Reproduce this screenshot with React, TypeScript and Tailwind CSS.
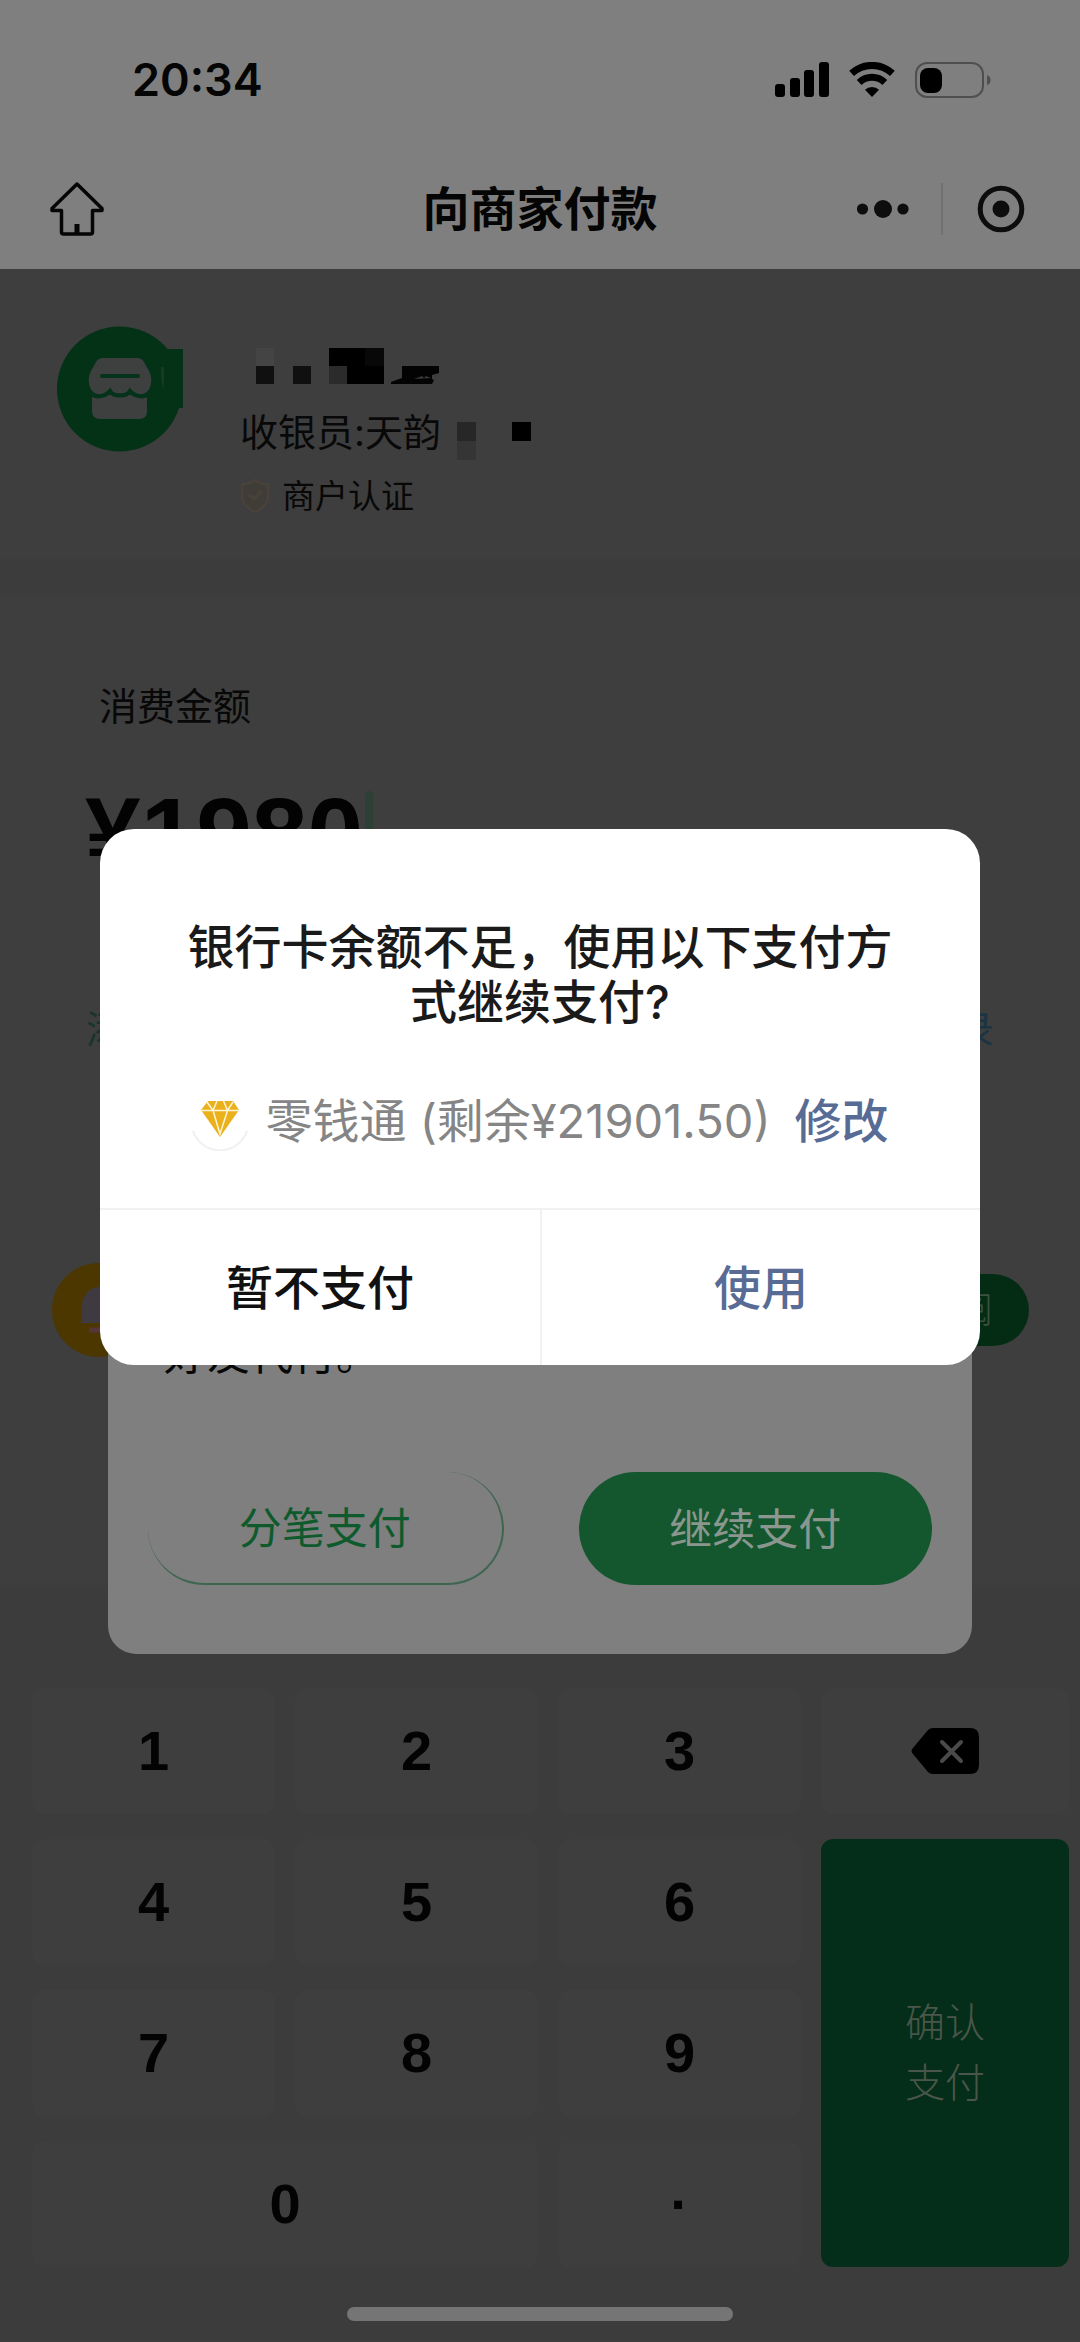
import { useState } from 'react'
import { clsx } from 'clsx'

/* ─── Keypad Config ─── */
const KEYS = [
  { id: '1', area: 'col-start-1 row-start-1' },
  { id: '2', area: 'col-start-2 row-start-1' },
  { id: '3', area: 'col-start-3 row-start-1' },
  { id: '4', area: 'col-start-1 row-start-2' },
  { id: '5', area: 'col-start-2 row-start-2' },
  { id: '6', area: 'col-start-3 row-start-2' },
  { id: '7', area: 'col-start-1 row-start-3' },
  { id: '8', area: 'col-start-2 row-start-3' },
  { id: '9', area: 'col-start-3 row-start-3' },
  { id: '0', area: 'col-start-1 col-span-2 row-start-4' },
  { id: '·', area: 'col-start-3 row-start-4' },
]

/* ─── Icons ─── */
function SignalIcon() {
  return (
    <svg width="54" height="36" viewBox="0 0 54 36" fill="#000">
      <rect x="0" y="22" width="10" height="13" rx="3" />
      <rect x="15" y="16" width="10" height="19" rx="3" />
      <rect x="29" y="8" width="10" height="27" rx="3" />
      <rect x="44" y="0" width="10" height="35" rx="3" />
    </svg>
  )
}

function WifiIcon() {
  return (
    <svg width="46" height="36" viewBox="0 0 46 36" fill="none" stroke="#000">
      <path d="M2.6 11.400A30 30 0 0 1 43.4 11.400" strokeWidth="7" />
      <path d="M10.2 20.500A18.500 18.500 0 0 1 35.8 20.500" strokeWidth="7" />
      <path d="M23 35l-7-7.2a10 10 0 0 1 14 0z" fill="#000" stroke="none" />
    </svg>
  )
}

function BatteryIcon() {
  return (
    <svg width="76" height="36" viewBox="0 0 76 36" fill="none">
      <rect x="1" y="1" width="67" height="34" rx="11" stroke="#4f4f4f" strokeWidth="2" />
      <rect x="5" y="6" width="22" height="25" rx="8" fill="#000" />
      <path d="M72 13c3 1 3.500 3 3.500 5s-.5 4-3.500 5z" fill="#4f4f4f" />
    </svg>
  )
}

function HomeIcon() {
  return (
    <svg width="54" height="54" viewBox="0 0 54 54" fill="none" stroke="#050505" strokeWidth="3.500" strokeLinejoin="round">
      <path d="M27 2L2 26.500v2h9.500V50q0 2 2 2h27q2 0 2-2V28.500H52v-2z" />
      <path d="M27 52V42" strokeWidth="5" />
    </svg>
  )
}

function MoreIcon() {
  return (
    <svg width="52" height="20" viewBox="0 0 52 20" fill="#0d0d0d">
      <circle cx="5.500" cy="10" r="5.600" />
      <circle cx="26" cy="10" r="9" />
      <circle cx="46" cy="10" r="5.600" />
    </svg>
  )
}

function CloseIcon() {
  return (
    <svg width="48" height="48" viewBox="0 0 48 48" fill="none">
      <circle cx="24" cy="24" r="20.800" stroke="#0d0d0d" strokeWidth="5" />
      <circle cx="24" cy="24" r="8.500" fill="#0d0d0d" />
    </svg>
  )
}

function ShopLogo() {
  return (
    <svg width="128" height="126" viewBox="0 0 128 126" fill="none">
      <circle cx="62.500" cy="63" r="62.500" fill="#033217" />
      <rect x="105" y="23" width="21" height="59" fill="#033217" />
      <path d="M46 32h34q5 0 7 4l5 9q3 6 2 12c-1 8-6 12-12 11-4 0-6-2-9-4-3 5-17 5-20 0-3 2-5 4-9 4-6 1-11-3-12-11q-1-6 2-12l5-9q2-4 7-4z" fill="#3e4040" />
      <path d="M35 69h55v16q0 8-8 8H43q-8 0-8-8z" fill="#3e4040" />
      <path d="M33 66c3 4 7 5 11 4 4 0 6-2 9-5 3 6 17 6 20 0 3 3 5 5 9 5 4 1 8 0 11-4" stroke="#05321a" strokeWidth="4" />
      <path d="M45 50h36" stroke="#05321a" strokeWidth="4" strokeLinecap="round" />
      <path d="M104 41v8q0 8 3 14V41z" fill="#1b3827" />
    </svg>
  )
}

function MaskedName() {
  return (
    <svg width="184" height="36" viewBox="0 0 184 36">
      <rect x="0" y="0" width="18" height="18" fill="#444" />
      <rect x="0" y="18" width="18" height="18" fill="#101010" />
      <rect x="37" y="18" width="18" height="18" fill="#101010" />
      <rect x="73" y="0" width="55" height="36" fill="#000" />
      <rect x="109" y="0" width="19" height="18" fill="#080808" />
      <rect x="73" y="18" width="18" height="18" fill="#2b2b2b" />
      <path d="M146 18h37v7l-7 2v4l2 1-2 4h-41v-2l11-4z" fill="#030303" />
      <path d="M158 31l8-3 2 2 2-2 5 2z" fill="#3a3a3a" />
    </svg>
  )
}

function MaskedSuffix() {
  return (
    <svg width="74" height="38" viewBox="0 0 74 38">
      <rect x="0" y="0" width="19" height="19" fill="#272727" />
      <rect x="0" y="19" width="19" height="19" fill="#353535" />
      <rect x="55" y="0" width="19" height="19" fill="#000" />
    </svg>
  )
}

function ShieldIcon() {
  return (
    <svg width="30" height="36" viewBox="0 0 30 36" fill="none" stroke="#48423a" strokeWidth="2.500" strokeLinejoin="round">
      <path d="M15 2C11 5 6 6 2 6v14c0 6 5 10 13 14 8-4 13-8 13-14V6c-4 0-9-1-13-4z" fill="#403d39" />
      <path d="M9 17l5 4 8-8" strokeWidth="3" />
    </svg>
  )
}

function BellIcon() {
  return (
    <svg width="94" height="94" viewBox="0 0 94 94" fill="none">
      <circle cx="47" cy="47" r="47" fill="#4d3700" />
      <path d="M28 60q2-2 2-7v-9c0-12 8-20 17-20s17 8 17 20v9q0 5 2 7z" fill="#3f3a40" />
      <path d="M37 67h20" stroke="#53353a" strokeWidth="5" />
    </svg>
  )
}

function DiamondIcon() {
  return (
    <svg width="58" height="60" viewBox="0 0 58 60" fill="none">
      <path d="M2 40a28.500 28.500 0 0 0 54 0" stroke="#f0f0f0" strokeWidth="2" />
      <path d="M17 10h25l6 9-19 27L10 19z" fill="#eab11c" />
      <path d="M9 19.500h40M22 19.500L29 43l7.500-23.500M16 11l6 8.500 4-9.500M42 11l-5.500 8.500-4-9.500" stroke="#fff6da" strokeWidth="1.500" />
    </svg>
  )
}

function BackspaceIcon() {
  return (
    <svg width="68" height="48" viewBox="0 0 68 48" fill="none">
      <path d="M22 1h37q9 0 9 9v28q0 9-9 9H22q-3 0-5-2L2 27q-3-3 0-6L17 3q2-2 5-2z" fill="#000" />
      <path d="M31 15l19 19M50 15L31 34" stroke="#4a4a4a" strokeWidth="4" strokeLinecap="round" />
    </svg>
  )
}

/* ─── Header ─── */
function Header() {
  return (
    <header className="bg-[#7f7f7f] pt-[52px]">
      <div className="flex h-14 items-center justify-between pr-[89px] pl-[132px]">
        <span className="text-[45px] leading-14 font-semibold text-[#050505]">20:34</span>
        <div className="flex items-center gap-5">
          <SignalIcon />
          <WifiIcon />
          <BatteryIcon />
        </div>
      </div>
      <nav className="mt-[41px] grid h-[120px] grid-cols-[1fr_auto_1fr] items-center">
        <div className="flex pl-[50px]">
          <button aria-label="首页">
            <HomeIcon />
          </button>
        </div>
        <h1 className="text-[47px] leading-14 font-bold text-[#050505]">向商家付款</h1>
        <div className="flex items-center justify-end pr-[55px]">
          <button aria-label="更多">
            <MoreIcon />
          </button>
          <span className="mr-[34px] ml-[32px] h-[52px] w-[2px] bg-[#717171]" />
          <button aria-label="关闭">
            <CloseIcon />
          </button>
        </div>
      </nav>
    </header>
  )
}

/* ─── Merchant ─── */
function Merchant() {
  return (
    <section className="flex gap-[55px] pt-[57px] pr-14 pb-[43px] pl-[57px] text-[#080808]">
      <ShopLogo />
      <div className="pt-[22px]">
        <div className="pl-4">
          <MaskedName />
        </div>
        <div className="mt-5 flex items-end gap-4">
          <span className="text-[38px] leading-14">收银员:天韵</span>
          <MaskedSuffix />
        </div>
        <div className="mt-4 flex items-center gap-3">
          <ShieldIcon />
          <span className="text-[33px] leading-10">商户认证</span>
        </div>
      </div>
    </section>
  )
}

/* ─── Amount ─── */
function Amount({ value }: { value: string }) {
  return (
    <section className="pt-[83px]">
      <h2 className="px-[99px] text-[38px] leading-14 text-[#080808]">消费金额</h2>
      <div className="mt-[49px] flex items-end gap-[2px] px-[85px]">
        <span className="font-['Liberation_Sans',sans-serif] text-[100px] leading-[100px] font-bold text-[#030303]">
          ¥{value}
        </span>
        <span className="h-[92px] w-2 rounded-sm bg-[#2d4036]" />
      </div>
      <div className="mt-[118px] flex justify-between px-[86px] text-[38px] leading-14">
        <a href="#note" className="text-[#1a342d]">添加</a>
        <a href="#records" className="text-[#1a3444]">记录</a>
      </div>
    </section>
  )
}

/* ─── Keypad ─── */
function Keypad({ onKey, onDelete }: { onKey: (k: string) => void; onDelete: () => void }) {
  return (
    <section className="bg-[#3c3c3c] pt-[103px] pr-[11px] pb-10 pl-8">
      <div className="grid auto-rows-[126px] grid-cols-[243fr_243fr_243fr_248fr] gap-x-5 gap-y-[25px]">
        {KEYS.map((k) => (
          <button
            key={k.id}
            onClick={() => onKey(k.id)}
            className={clsx(
              "rounded-xl bg-[#3e3e3e] font-['Liberation_Sans',sans-serif] text-[56px] leading-16 font-bold text-[#030303]",
              k.area
            )}
          >
            {k.id}
          </button>
        ))}
        <button
          aria-label="删除"
          onClick={onDelete}
          className="col-start-4 row-start-1 flex items-center justify-center rounded-xl bg-[#3e3e3e]"
        >
          <BackspaceIcon />
        </button>
        <button className="col-start-4 row-span-3 row-start-2 rounded-xl bg-[#042e19] text-[40px] leading-[60px] font-light text-[#4a5649]">
          确认
          <br />
          支付
        </button>
      </div>
    </section>
  )
}

/* ─── Split Payment Sheet ─── */
function SplitSheet() {
  return (
    <div className="absolute inset-x-0 top-[1200px] px-[108px]">
      <div className="rounded-[28px] bg-[#7f7f7f] px-10 pt-[126px] pb-[69px]">
        <p className="px-4 text-[43px] leading-14 text-[#080808]">好友代付。</p>
        <div className="mt-[90px] flex gap-[75px]">
          <button className="h-[113px] flex-1 rounded-full border-r-2 border-b-2 border-[#3f6650] text-[43px] leading-14 text-[#0f5a2d]">
            分笔支付
          </button>
          <button className="h-[113px] flex-1 rounded-full bg-[#14572e] text-[43px] leading-14 text-[#8b978e]">
            继续支付
          </button>
        </div>
      </div>
    </div>
  )
}

/* ─── Balance Dialog ─── */
function BalanceDialog() {
  return (
    <div className="absolute inset-x-0 top-[829px] px-[100px]">
      <div role="dialog" aria-labelledby="dialog-title" className="rounded-[34px] bg-white">
        <h2 id="dialog-title" className="px-20 pt-[90px] text-center text-[47px] leading-[55px] font-medium text-[#1a1a1a]">
          银行卡余额不足，使用以下支付方式继续支付?
        </h2>
        <div className="mt-[62px] flex items-center justify-center gap-4 pb-[57px] text-[47px] leading-[60px]">
          <DiamondIcon />
          <span className="text-[#858585]">零钱通 (剩余¥21901.50)</span>
          <button className="ml-2 font-medium text-[#576b95]">修改</button>
        </div>
        <div className="grid grid-cols-2 border-t-2 border-[#f1f1f1] text-[47px] leading-14 font-medium">
          <button className="h-[155px] text-[#111]">暂不支付</button>
          <button className="h-[155px] border-l-2 border-[#f1f1f1] text-[#576b95]">使用</button>
        </div>
      </div>
    </div>
  )
}

/* ─── Main Component ─── */
export default function App() {
  const [amount, setAmount] = useState('1980')

  return (
    <div className="relative min-h-screen bg-[#3e3e3e] font-['Inter','Noto_Sans_CJK_SC',sans-serif]">
      <Header />
      <Merchant />
      <div className="h-9 bg-[#3c3c3c]" />
      <Amount value={amount} />

      {/* Subscribe banner */}
      <div className="mt-[206px] mb-[228px] flex items-center justify-between pr-[51px] pl-[52px]">
        <BellIcon />
        <button className="h-[72px] rounded-full bg-[#042c15] px-9 text-[36px] leading-14 font-light text-[#3b5240]">
          去订阅
        </button>
      </div>

      <Keypad onKey={(k) => setAmount(amount + (k === '·' ? '.' : k))} onDelete={() => setAmount(amount.slice(0, -1))} />
      <div className="flex justify-center bg-[#3c3c3c] pb-5">
        <div className="h-[14px] w-[386px] rounded-full bg-[#757575]" />
      </div>

      <SplitSheet />
      <BalanceDialog />
    </div>
  )
}
